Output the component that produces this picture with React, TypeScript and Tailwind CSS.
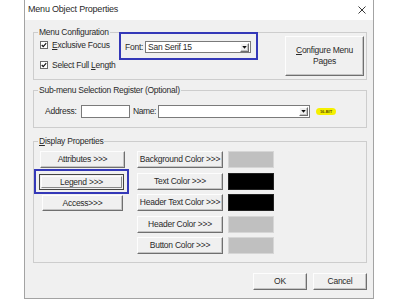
import type { ReactNode } from "react";

const raised =
  "bg-[#f0f0f0] border border-t-[#fdfdfd] border-l-[#fdfdfd] border-r-[#6f6f6f] border-b-[#6f6f6f] shadow-[inset_-1px_-1px_0_#c4c4c4]";

function Group({ label, className, children }: { label: ReactNode; className: string; children: ReactNode }) {
  return (
    <div className={`border border-[#cdcdcd] ${className}`}>
      <div className="-mt-[6px] -mb-[4px] ml-[4px] px-[1px] w-fit h-[10px] leading-[10px] bg-[#f0f0f0]">
        {label}
      </div>
      {children}
    </div>
  );
}

function Check() {
  return (
    <span className="w-[8px] h-[8px] bg-white border border-[#6a6a6a] flex items-center justify-center">
      <svg viewBox="0 0 8 8" className="w-[6px] h-[6px]">
        <path d="M1 4 L3 6.2 L7 1.5" stroke="#111" strokeWidth="1.5" fill="none" />
      </svg>
    </span>
  );
}

function DropArrow() {
  return (
    <span className={`w-[9px] h-[9px] mr-[1px] flex items-center justify-center ${raised}`}>
      <svg viewBox="0 0 6 4" className="w-[5px] h-[3px]">
        <path d="M0 0 L6 0 L3 3.5 Z" fill="#111" />
      </svg>
    </span>
  );
}

function Btn({ children, className }: { children: ReactNode; className: string }) {
  return <div className={`${raised} flex items-center justify-center ${className}`}>{children}</div>;
}

export default function App() {
  return (
    <div className="w-[400px] h-[300px] bg-white font-['Liberation_Sans',Arial,sans-serif] text-[8.5px] tracking-[-0.25px] text-[#2a2a2a]">
      <div className="ml-[24px] w-[350px] h-[299px] flex flex-col border-x border-b border-[#a3a3a3] bg-[#f0f0f0]">
        {/* Title bar */}
        <div className="h-[20px] shrink-0 bg-white flex items-center justify-between pl-[3px] pr-[7px]">
          <span className="text-[9px] tracking-[-0.2px]">Menu Object Properties</span>
          <svg viewBox="0 0 8 8" className="w-[8px] h-[8px]">
            <path d="M0.5 0.5 L7.5 7.5 M7.5 0.5 L0.5 7.5" stroke="#222" strokeWidth="0.9" />
          </svg>
        </div>

        <div className="pl-[8px] pr-[6px] flex flex-col">
          {/* Menu Configuration */}
          <Group label="Menu Configuration" className="mt-[12px] h-[48px]">
            <div className="flex items-start">
              <div className="w-[91px] pl-[6px] mt-[6px] flex flex-col gap-[8px]">
                <div className="h-[12px] flex items-center gap-[4px]">
                  <Check />
                  <span>
                    <u>E</u>xclusive Focus
                  </span>
                </div>
                <div className="h-[12px] flex items-center gap-[4px]">
                  <Check />
                  <span>
                    Select Full <u>L</u>ength
                  </span>
                </div>
              </div>
              <div className="relative mt-[8px] h-[12px] flex items-center">
                <span className="w-[20px]">Font:</span>
                <div className="w-[106px] h-[12px] bg-white border border-[#7a7a7a] flex items-center justify-between pl-[2px]">
                  <span>San Serif 15</span>
                  <DropArrow />
                </div>
                <div className="absolute left-[-6px] top-[-9px] w-[139px] h-[28px] border-2 border-[#3438b8]" />
              </div>
              <Btn className="ml-auto mr-[2px] mt-[3px] w-[79px] h-[40px] flex-col leading-[11px]">
                <span>
                  <u>C</u>onfigure Menu
                </span>
                <span>Pages</span>
              </Btn>
            </div>
          </Group>

          {/* Sub-menu Selection Register */}
          <Group label="Sub-menu Selection Register (Optional)" className="mt-[10px] h-[38px]">
            <div className="mt-[14px] pl-[11px] h-[13px] flex items-center">
              <span className="w-[36px]">Address:</span>
              <div className="w-[49px] h-[13px] bg-white border border-[#7a7a7a]" />
              <span className="ml-[3px] w-[25px] tracking-[-0.4px]">Name:</span>
              <div className="w-[152px] h-[13px] bg-white border border-[#7a7a7a] flex items-center justify-end">
                <DropArrow />
              </div>
              <span className="ml-[6px] w-[20px] h-[7px] rounded-full bg-[#f5f000] flex items-center justify-center text-[4px] font-bold tracking-normal text-[#5a5000] leading-none">
                16-BIT
              </span>
            </div>
          </Group>

          {/* Display Properties */}
          <Group
            label={
              <span>
                <u>D</u>isplay Properties
              </span>
            }
            className="mt-[13px] h-[122px]"
          >
            <div className="mt-[9px] pl-[6px] flex">
              <div className="w-[97px] flex flex-col items-start">
                <Btn className="w-[85px] h-[17px]">Attributes &gt;&gt;&gt;</Btn>
                <div className="relative mt-[6px] -ml-[1px]">
                  <div className="w-[85px] h-[16px] border border-[#444] p-[1px] bg-[#f0f0f0]">
                    <div className="w-full h-full border border-t-[#fdfdfd] border-l-[#fdfdfd] border-r-[#888] border-b-[#888] flex items-center justify-center">
                      Legend &gt;&gt;&gt;
                    </div>
                  </div>
                  <div className="absolute left-[-5px] top-[-5px] w-[95px] h-[25px] border-2 border-[#3438b8]" />
                </div>
                <Btn className="mt-[5px] ml-[2px] w-[81px] h-[16px]">Access&gt;&gt;&gt;</Btn>
              </div>
              <div className="flex flex-col gap-[4.5px]">
                {[
                  ["Background Color >>>", "bg-[#c0c0c0] border-[#d6d6d6]"],
                  ["Text Color >>>", "bg-black border-[#222]"],
                  ["Header Text Color >>>", "bg-black border-[#222]"],
                  ["Header Color >>>", "bg-[#c0c0c0] border-[#d6d6d6]"],
                  ["Button Color >>>", "bg-[#c0c0c0] border-[#d6d6d6]"],
                ].map(([label, swatch]) => (
                  <div key={label} className="flex items-center gap-[5px]">
                    <Btn className="w-[86px] h-[17px]">{label}</Btn>
                    <div className={`w-[46px] h-[17px] border ${swatch}`} />
                  </div>
                ))}
              </div>
            </div>
          </Group>

          {/* Footer */}
          <div className="mt-[10px] flex justify-end gap-[6px]">
            <Btn className="w-[54px] h-[17px]">OK</Btn>
            <Btn className="w-[54px] h-[17px]">Cancel</Btn>
          </div>
        </div>
      </div>
    </div>
  );
}
